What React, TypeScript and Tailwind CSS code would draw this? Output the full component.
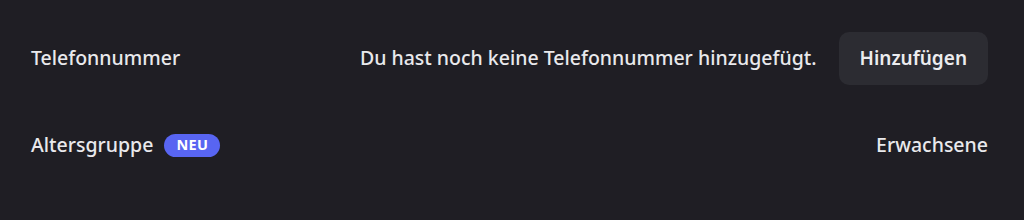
export default function App() {
  return (
    <div
      className="h-[220px] w-full bg-[#1f1e24] pl-[31px] pr-[36px] text-[#e9e9ec]"
      style={{ fontFamily: '"Noto Sans", "Open Sans", sans-serif' }}
    >
      <div className="flex h-[116px] items-center justify-between">
        <span className="text-[19.5px] font-medium">Telefonnummer</span>
        <div className="flex items-center gap-[22px]">
          <span className="text-[19.5px] font-medium">
            Du hast noch keine Telefonnummer hinzugefügt.
          </span>
          <button className="h-[53px] rounded-[10px] bg-[#2c2c32] px-[21px] text-[19px] font-semibold text-[#ececef]">
            Hinzufügen
          </button>
        </div>
      </div>
      <div className="flex h-[58px] items-center justify-between">
        <div className="flex items-center gap-[11px]">
          <span className="text-[19.5px] font-medium">Altersgruppe</span>
          <span className="flex h-[23px] items-center rounded-full bg-[#5865f2] px-[12px] text-[14.5px] font-bold tracking-wide text-white">
            NEU
          </span>
        </div>
        <span className="text-[19.5px] font-medium">Erwachsene</span>
      </div>
    </div>
  );
}
